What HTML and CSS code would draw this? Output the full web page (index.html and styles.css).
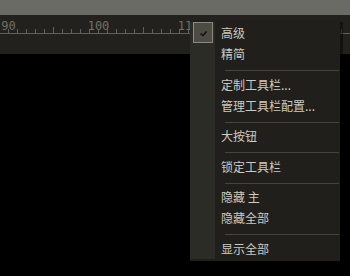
FILE: index.html
```html
<!DOCTYPE html>
<html>
<head>
<meta charset="utf-8">
<link rel="stylesheet" href="styles.css">
</head>
<body>
<div class="topbar"></div>
<div class="ruler">
  <div class="labels">
    <span class="lbl">90</span>
    <span class="lbl">100</span>
    <span class="lbl">110</span>
    <span class="lbl">120</span>
  </div>
  <div class="ticks"></div>
</div>
<div class="canvas"></div>

<div class="menu">
  <div class="list">
    <div class="item">
      <span class="gut"><span class="chk"><svg width="18" height="19" viewBox="0 0 18 19"><path d="M6.5 10.5 L9 12.5 L12.5 8.5" fill="none" stroke="#111" stroke-width="1.6"/></svg></span></span>
      <span class="txt">高级</span>
    </div>
    <div class="item"><span class="gut"></span><span class="txt">精简</span></div>
    <div class="sep"></div>
    <div class="item"><span class="gut"></span><span class="txt">定制工具栏...</span></div>
    <div class="item"><span class="gut"></span><span class="txt">管理工具栏配置...</span></div>
    <div class="sep"></div>
    <div class="item"><span class="gut"></span><span class="txt">大按钮</span></div>
    <div class="sep"></div>
    <div class="item"><span class="gut"></span><span class="txt">锁定工具栏</span></div>
    <div class="sep"></div>
    <div class="item"><span class="gut"></span><span class="txt">隐藏 主</span></div>
    <div class="item"><span class="gut"></span><span class="txt">隐藏全部</span></div>
    <div class="sep"></div>
    <div class="item"><span class="gut"></span><span class="txt">显示全部</span></div>
  </div>
</div>
</body>
</html>
```

FILE: styles.css
```css
html, body {
  margin: 0;
  padding: 0;
}
body {
  width: 350px;
  height: 276px;
  overflow: hidden;
  background: #000;
  position: relative;
}
.topbar {
  height: 15px;
  background: #6b6b65;
}
.ruler {
  height: 39px;
  background: #22211d;
  padding-top: 4px;
  box-sizing: border-box;
  overflow: hidden;
}
.labels {
  height: 8px;
  display: flex;
  margin-left: -36.5px;
  font-family: "DejaVu Sans Mono", monospace;
  font-size: 12px;
  line-height: 14px;
  color: #707069;
  white-space: nowrap;
}
.lbl {
  flex: 0 0 90px;
  text-align: center;
}
.ticks {
  height: 6px;
  border-bottom: 1px solid #606058;
  background:
    repeating-linear-gradient(to right, transparent 0 53px, #606058 53px 54px, transparent 54px 90px) 0 0 / 100% 6px no-repeat,
    repeating-linear-gradient(to right, transparent 0 8px, #606058 8px 9px) 0 100% / 100% 4px no-repeat;
}
.canvas {
  height: 222px;
  background: #000;
}
.menu {
  position: absolute;
  left: 190px;
  top: 20px;
  width: 150px;
  padding: 2px 0;
  background: #201f1b;
  box-shadow: 3px 2px 0 rgba(0, 0, 0, 0.45);
  font-family: "Noto Sans CJK SC", "Noto Sans", sans-serif;
  font-size: 12px;
  color: #cccac2;
}
.list {
  background: linear-gradient(to right, #2c2c27 0 25px, transparent 25px);
}
.item {
  height: 21px;
  display: flex;
  align-items: center;
}
.gut {
  flex: 0 0 25px;
  height: 21px;
  display: flex;
  align-items: center;
}
.chk {
  margin-left: 3px;
  width: 18px;
  height: 19px;
  border: 1px solid #8a897f;
  background: #4c4b44;
  display: block;
}
.chk svg {
  display: block;
}
.txt {
  margin-left: 6px;
  line-height: 21px;
  white-space: nowrap;
}
.sep {
  height: 1px;
  margin: 6px 1px 2.6px 35px;
  background: #45443e;
}
```
